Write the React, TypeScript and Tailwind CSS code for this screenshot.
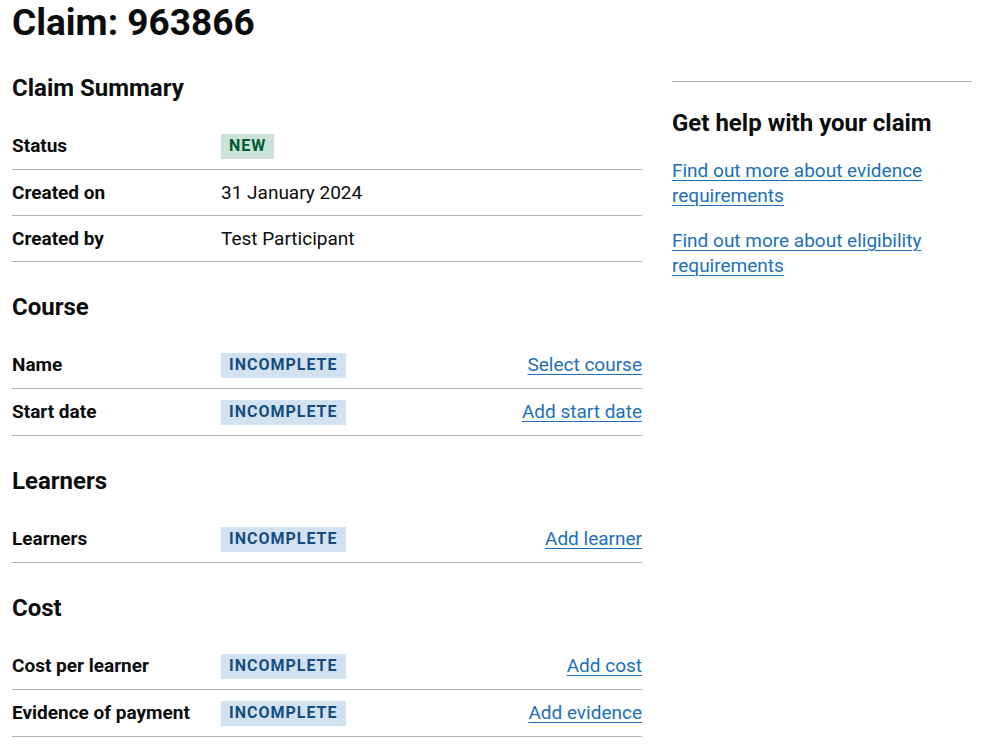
import React from "react";

type Row = {
  key: string;
  value?: string;
  tag?: { label: string; tone: "green" | "blue" };
  action?: string;
};

const TAG_STYLES = {
  green: "bg-[#cce2d8] text-[#005a30]",
  blue: "bg-[#d2e2f1] text-[#144e81]",
};

const SECTIONS: { title: string; rows: Row[] }[] = [
  {
    title: "Claim Summary",
    rows: [
      { key: "Status", tag: { label: "New", tone: "green" } },
      { key: "Created on", value: "31 January 2024" },
      { key: "Created by", value: "Test Participant" },
    ],
  },
  {
    title: "Course",
    rows: [
      { key: "Name", tag: { label: "Incomplete", tone: "blue" }, action: "Select course" },
      { key: "Start date", tag: { label: "Incomplete", tone: "blue" }, action: "Add start date" },
    ],
  },
  {
    title: "Learners",
    rows: [
      { key: "Learners", tag: { label: "Incomplete", tone: "blue" }, action: "Add learner" },
    ],
  },
  {
    title: "Cost",
    rows: [
      { key: "Cost per learner", tag: { label: "Incomplete", tone: "blue" }, action: "Add cost" },
      { key: "Evidence of payment", tag: { label: "Incomplete", tone: "blue" }, action: "Add evidence" },
    ],
  },
];

const linkClass =
  "text-[#1d70b8] underline decoration-1 underline-offset-[3px]";

const Tag = ({ label, tone }: { label: string; tone: "green" | "blue" }) => (
  <strong
    className={`mt-px block h-[25px] px-2 pt-[2px] pb-[3px] text-[16px] leading-[20px] font-bold uppercase tracking-[1px] ${TAG_STYLES[tone]}`}
  >
    {label}
  </strong>
);

const SummaryList = ({ rows }: { rows: Row[] }) => (
  <dl className="mb-[30px]">
    {rows.map((row) => (
      <div
        key={row.key}
        className="grid grid-cols-[209px_1fr_auto] border-b border-[#b1b4b6] py-[10px]"
      >
        <dt className="font-bold">{row.key}</dt>
        <dd className="flex items-start">
          {row.tag ? <Tag label={row.tag.label} tone={row.tag.tone} /> : row.value}
        </dd>
        <dd className="text-right">
          {row.action && (
            <a href="#" className={linkClass}>
              {row.action}
            </a>
          )}
        </dd>
      </div>
    ))}
  </dl>
);

export default function App() {
  return (
    <div
      className="min-h-[745px] bg-white pl-[12px] pt-[3px] text-[19px] leading-[25px] text-[#0b0c0c]"
      style={{ fontFamily: "Roboto, 'Liberation Sans', Arial, sans-serif" }}
    >
      <h1 className="mb-[30px] text-[37px] leading-[40px] font-bold">
        Claim: 963866
      </h1>
      <div className="flex gap-[30px]">
        {/* Main column */}
        <div className="w-[630px]">
          {SECTIONS.map((section) => (
            <section key={section.title}>
              <h2 className="mb-[20px] text-[24px] leading-[30px] font-bold">
                {section.title}
              </h2>
              <SummaryList rows={section.rows} />
            </section>
          ))}
        </div>

        {/* Related help */}
        <aside className="w-[300px] self-start">
          <div className="mt-[8px] border-t border-[#b1b4b6] pt-[26px]">
            <h2 className="mb-[20px] text-[24px] leading-[30px] font-bold">
              Get help with your claim
            </h2>
            <ul className="flex flex-col gap-[20px]">
              <li>
                <a href="#" className={linkClass}>
                  Find out more about evidence requirements
                </a>
              </li>
              <li>
                <a href="#" className={linkClass}>
                  Find out more about eligibility requirements
                </a>
              </li>
            </ul>
          </div>
        </aside>
      </div>
    </div>
  );
}
